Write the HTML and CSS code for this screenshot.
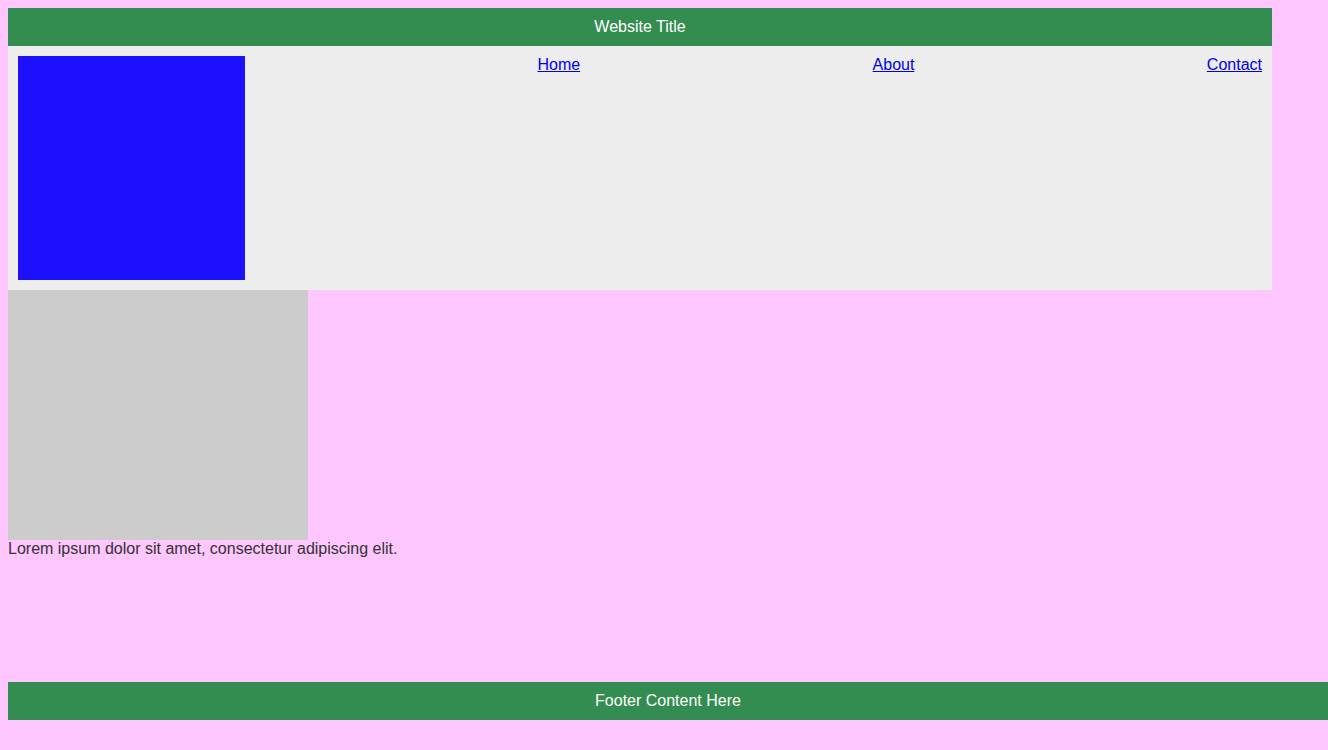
FILE: index.html
```html
<!DOCTYPE html>
<html>
<head>
<meta charset="utf-8">
<title>Website</title>
<link rel="stylesheet" href="styles.css">
</head>
<body>
<header class="site-header">Website Title</header>
<nav class="site-nav">
  <div class="logo"></div>
  <a href="#">Home</a>
  <a href="#">About</a>
  <a href="#">Contact</a>
</nav>
<main class="content">
  <div class="picture"></div>
  <p class="text">Lorem ipsum dolor sit amet, consectetur adipiscing elit.</p>
</main>
<footer class="site-footer">Footer Content Here</footer>
</body>
</html>
```
FILE: styles.css
```css
html, body {
  height: 100%;
}
body {
  margin: 8px;
  background: #ffc6ff;
  font-family: "Liberation Sans", Arial, sans-serif;
  font-size: 16px;
  line-height: 18px;
  color: #333333;
}
.site-header {
  width: 1264px;
  height: 38px;
  box-sizing: border-box;
  padding: 10px 0;
  background: #338c50;
  color: #ffffff;
  text-align: center;
}
.site-nav {
  width: 1264px;
  box-sizing: border-box;
  padding: 10px;
  background: #ededed;
  display: flex;
  justify-content: space-between;
  align-items: flex-start;
}
.site-nav a {
  color: #0000ee;
  text-decoration: underline;
}
.logo {
  width: 227px;
  height: 224px;
  background: #1c10ff;
}
.picture {
  width: 300px;
  height: 250px;
  background: #cccccc;
}
.text {
  margin: 0;
}
.site-footer {
  position: fixed;
  left: 8px;
  right: 0;
  bottom: 30px;
  height: 38px;
  box-sizing: border-box;
  padding: 10px 0;
  background: #338c50;
  color: #ffffff;
  text-align: center;
}
```
